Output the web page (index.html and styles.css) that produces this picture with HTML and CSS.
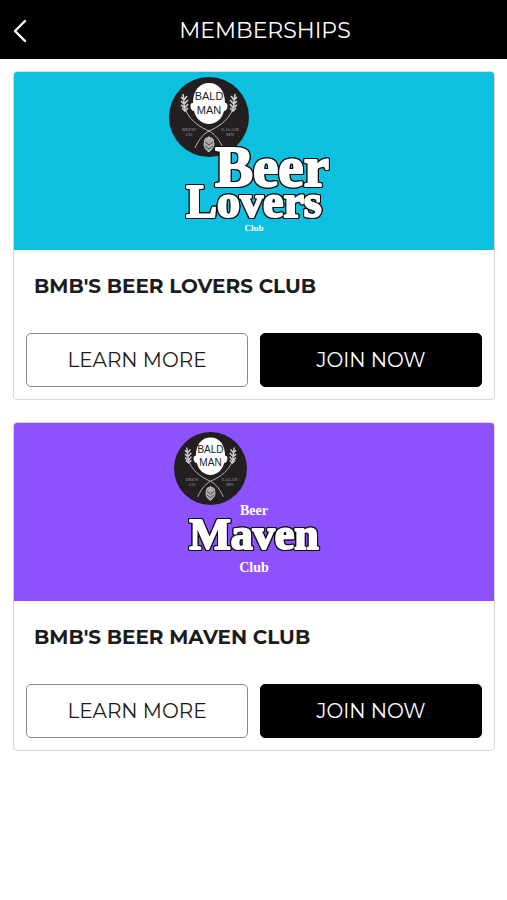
FILE: index.html
```html
<!DOCTYPE html>
<html lang="en">
<head>
    <meta charset="UTF-8">
    <meta name="viewport" content="width=device-width, initial-scale=1.0">
    <title>Memberships</title>
    <link rel="stylesheet" href="styles.css">
</head>
<body>
    <header class="top-bar">
        <button class="back-button" type="button" aria-label="Back">
            <svg width="14" height="24" viewBox="0 0 14 24"><path d="M12 2 L2 12 L12 22"/></svg>
        </button>
        <h1>MEMBERSHIPS</h1>
    </header>

    <main class="card-list">
        <article class="club-card">
            <svg class="banner banner-lovers" viewBox="0 0 480 178">
                <!-- brewery logo, shared by both banners -->
                <symbol id="logo" viewBox="0 0 80 80">
                    <circle cx="40" cy="40" r="40" fill="#231f20"/>
                    <path d="M40 6 C50 6 56 14 56 26 C60 25 59 34 55 34 C53 42 47 47 40 47 C33 47 27 42 25 34 C21 34 20 25 24 26 C24 14 30 6 40 6Z" fill="#fff"/>
                    <text class="logo-name" x="40" y="23">BALD</text>
                    <text class="logo-name" x="40" y="37">MAN</text>
                    <g id="stalk">
                        <path d="M17 34 C22 45 33 51 40 54 C47 58 51 64 54 71" fill="none" stroke="#bbb" stroke-width="1"/>
                        <path d="M14 17 L16 34 M12 20 L15 23 L18 19 M12 24 L15 27 L19 23 M12 28 L16 31 L19 27 M13 31 L16 34 L19 31" fill="none" stroke="#ccc" stroke-width="1.6"/>
                    </g>
                    <use href="#stalk" transform="matrix(-1 0 0 1 80 0)"/>
                    <path d="M40 59 V62 M36 62 C38 60 42 60 44 62 L45 67 C45 71 42 73 40 75 C37 73 35 71 35 67Z" fill="#aaa" stroke="#bbb"/>
                    <path d="M36 65 L40 68 L44 65 M36 69 L40 72 L44 69" fill="none" stroke="#444"/>
                    <text class="logo-place" x="20" y="54">BREW</text>
                    <text class="logo-place" x="20" y="59">CO</text>
                    <text class="logo-place" x="61" y="54">EAGAN</text>
                    <text class="logo-place" x="61" y="59">MN</text>
                </symbol>
                <use href="#logo" x="155" y="5" width="80" height="80"/>
                <text class="club-word word-lovers" x="240" y="145">Lovers</text>
                <text class="club-word word-beer" x="258" y="114">Beer</text>
                <text class="club-small small-lovers" x="240" y="159">Club</text>
            </svg>
            <h2>BMB'S BEER LOVERS CLUB</h2>
            <div class="actions">
                <button class="learn-button" type="button">LEARN MORE</button>
                <button class="join-button" type="button">JOIN NOW</button>
            </div>
        </article>

        <article class="club-card">
            <svg class="banner banner-maven" viewBox="0 0 480 178">
                <use href="#logo" x="160" y="9" width="73" height="73"/>
                <text class="club-small" x="240" y="92">Beer</text>
                <text class="club-word word-maven" x="240" y="126">Maven</text>
                <text class="club-small" x="240" y="149">Club</text>
            </svg>
            <h2>BMB'S BEER MAVEN CLUB</h2>
            <div class="actions">
                <button class="learn-button" type="button">LEARN MORE</button>
                <button class="join-button" type="button">JOIN NOW</button>
            </div>
        </article>
    </main>
</body>
</html>
```
FILE: styles.css
```css
body { font-family: Montserrat, Inter, sans-serif; margin: 0; background: #fff; color: #1c1c1c; }

.top-bar { display: grid; grid-template-columns: 1fr auto 1fr; align-items: center; padding: 16px 13px 13px; background: #000; color: #fff; }
.top-bar h1 { margin: 0; font-size: 22px; line-height: 30px; font-weight: 400; padding-left: 23px; }
.back-button { justify-self: start; display: flex; padding: 0; border: none; background: none; cursor: pointer; }
.back-button path { fill: none; stroke: #fff; stroke-width: 2.4; stroke-linecap: round; stroke-linejoin: round; }

.card-list { display: flex; flex-direction: column; gap: 22px; padding: 12px 12px 12px 13px; }
.club-card { border: 1px solid #d8d8d8; border-radius: 4px; overflow: hidden; }
.club-card h2 { margin: 0; padding: 24px 20px 35px; font-size: 20px; line-height: 24px; font-weight: 700; }

.banner { display: block; width: 100%; height: auto; }
.banner-lovers { background: #0dc0e0; }
.banner-maven { background: #8c52ff; }
.banner text { text-anchor: middle; }
.logo-name { font: 11px "Liberation Sans", sans-serif; fill: #231f20; }
.logo-place { font: 5px "Liberation Serif", serif; fill: #999; }
.club-word { font-family: "Liberation Serif", serif; font-weight: 700; fill: #fff; stroke: #fff; stroke-width: 2; stroke-linejoin: round; filter: drop-shadow(1px 0 #111) drop-shadow(-1px 0 #111) drop-shadow(0 1px #111) drop-shadow(0 -1px #111); }
.word-beer { font-size: 57px; }
.word-lovers { font-size: 46px; }
.word-maven { font-size: 44px; }
.club-small { font: 700 14px "Liberation Serif", serif; fill: #fff; }
.small-lovers { font-size: 9px; }

.actions { display: flex; gap: 12px; padding: 0 12px 12px; }
.actions button { flex: 1; height: 54px; padding: 0; border-radius: 5px; font: 400 20px Montserrat, Inter, sans-serif; cursor: pointer; }
.learn-button { border: 1px solid #888; background: #fff; color: #1c1c1c; }
.join-button { border: 1px solid #000; background: #000; color: #fff; }
```
